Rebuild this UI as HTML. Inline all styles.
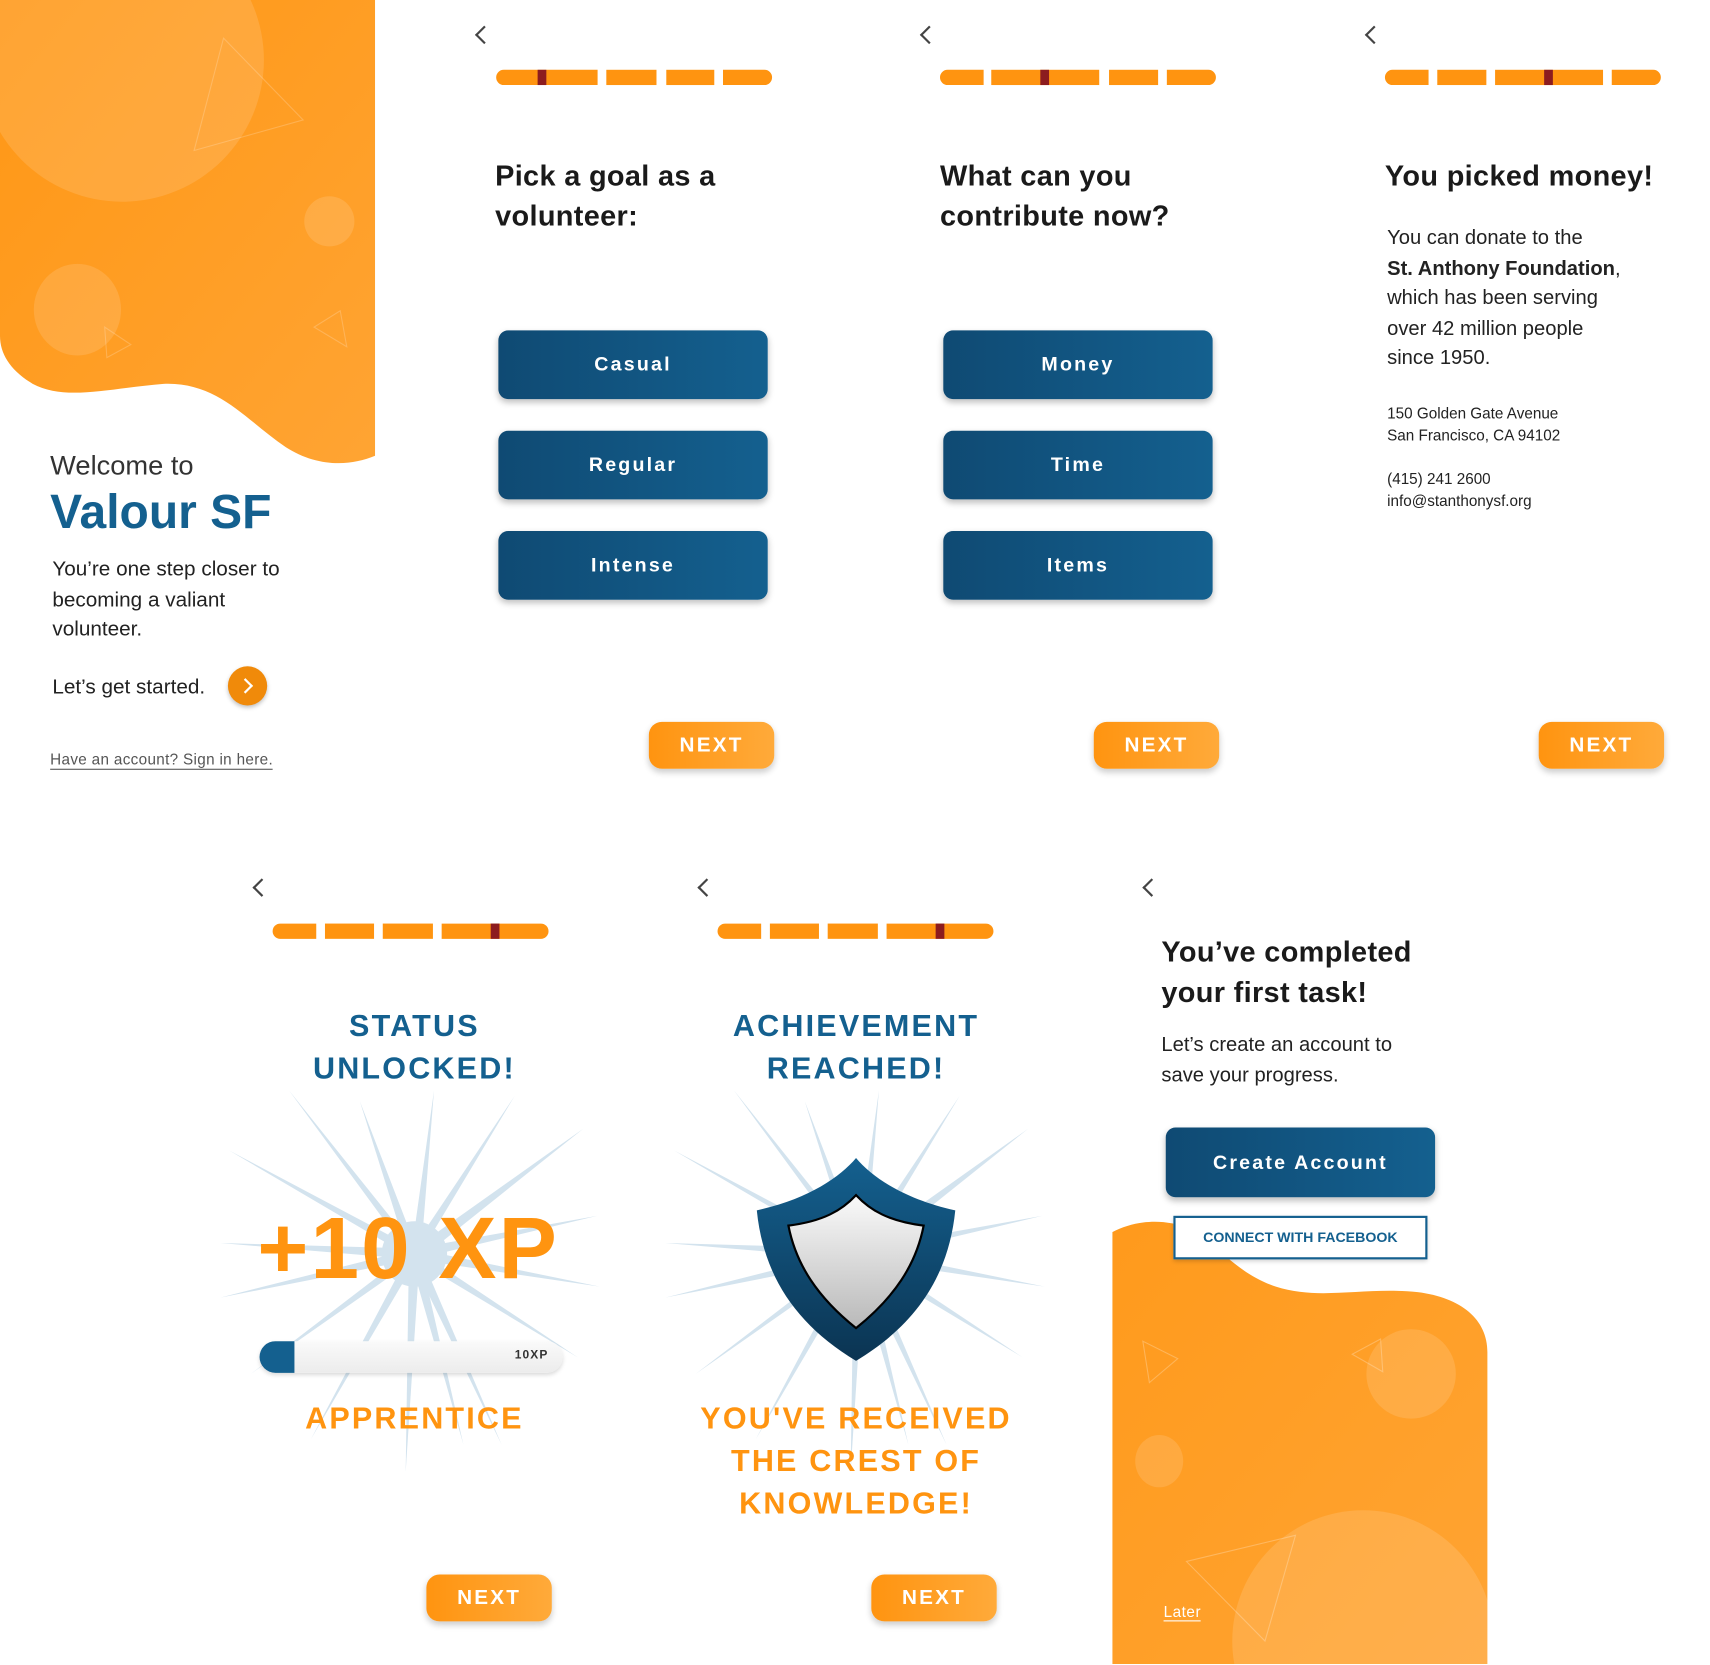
<!DOCTYPE html>
<html><head><meta charset="utf-8"><style>
html,body{margin:0;padding:0;background:#fff;overflow:hidden;width:1710px;height:1665px}
#c{position:relative;width:1710px;height:1665px;overflow:hidden}
#w{position:absolute;left:0;top:0;width:1568px;height:1526px;overflow:hidden;transform:scale(1.0905,1.0904);transform-origin:0 0;font-family:"Liberation Sans",sans-serif;color:#1a1a1a}
.a{position:absolute}
.seg{position:absolute;height:14px;background:#ff9410}
.mk{position:absolute;width:8px;height:14px;background:#8c1c1f}
.btn{position:absolute;width:247px;height:63px;border-radius:9px;background:linear-gradient(90deg,#0f4a73,#14608f);color:#fff;font-weight:bold;font-size:18px;letter-spacing:2px;text-align:center;line-height:63px;box-shadow:0 3px 6px rgba(0,0,0,.25)}
.next{position:absolute;width:115px;height:43px;border-radius:12px;background:linear-gradient(90deg,#ff9410,#ffaa3a);color:#fff;font-weight:bold;font-size:19px;letter-spacing:2px;text-align:center;line-height:43px;box-shadow:0 3px 6px rgba(0,0,0,.2)}
.back{position:absolute;width:10px;height:10px;border-left:2px solid #444;border-bottom:2px solid #444;transform:rotate(45deg)}
.h{position:absolute;font-size:26.5px;font-weight:bold;line-height:37px;letter-spacing:.3px;color:#1a1a1a;white-space:nowrap}
.big{position:absolute;font-weight:900;text-align:center;letter-spacing:2px;font-size:28px;line-height:39px}
</style></head><body><div id="c"><div id="w">

<svg class="a" style="left:0;top:0" width="344" height="430">
<defs><linearGradient id="g1" x1="0" y1="0" x2="1" y2="1"><stop offset="0" stop-color="#ff9715"/><stop offset="1" stop-color="#ffa433"/></linearGradient></defs>
<path d="M0 0H344V418C320 428 290 428 262 410C225 385 200 350 150 352C100 356 60 368 30 352C10 340 0 325 0 308Z" fill="url(#g1)"/>
<circle cx="112" cy="55" r="130" fill="#fff" opacity=".13"/>
<circle cx="302" cy="203" r="23" fill="#fff" opacity=".13"/>
<ellipse cx="71" cy="284" rx="40" ry="42" fill="#fff" opacity=".13"/>
<path d="M205 35L278 110 178 138Z" fill="none" stroke="#fff" stroke-opacity=".2"/>
<path d="M96 300L120 316 98 328Z" fill="none" stroke="#fff" stroke-opacity=".2"/>
<path d="M312 285L318 318 288 300Z" fill="none" stroke="#fff" stroke-opacity=".2"/>
</svg>
<div class="a" style="left:46px;top:413px;font-size:25px;color:#333">Welcome to</div>
<div class="a" style="left:46px;top:445px;font-size:44px;font-weight:bold;color:#14608f">Valour SF</div>
<div class="a" style="left:48px;top:509px;font-size:19px;line-height:27.5px;color:#222">You’re one step closer to<br>becoming a valiant<br>volunteer.</div>
<div class="a" style="left:48px;top:620px;font-size:19px;color:#222">Let’s get started.</div>
<div class="a" style="left:209px;top:611px;width:36px;height:36px;border-radius:50%;background:#f08a0a;box-shadow:0 2px 4px rgba(0,0,0,.25)"><div class="a" style="left:11px;top:13px;width:8px;height:8px;border-right:2px solid #fff;border-top:2px solid #fff;transform:rotate(45deg)"></div></div>
<div class="a" style="left:46px;top:688px;font-size:14px;color:#555;border-bottom:1px solid #555;padding-bottom:1px;letter-spacing:.3px">Have an account? Sign in here.</div>

<div class="back" style="left:438px;top:26px"></div>
<div class="seg" style="left:455px;top:64px;width:93px;border-radius:7px 0 0 7px"></div><div class="mk" style="left:493px;top:64px"></div>
<div class="seg" style="left:556px;top:64px;width:46px"></div><div class="seg" style="left:611px;top:64px;width:44px"></div><div class="seg" style="left:663px;top:64px;width:45px;border-radius:0 7px 7px 0"></div>
<div class="h" style="left:454px;top:143px">Pick a goal as a<br>volunteer:</div>
<div class="btn" style="left:457px;top:303px">Casual</div>
<div class="btn" style="left:457px;top:395px">Regular</div>
<div class="btn" style="left:457px;top:487px">Intense</div>
<div class="next" style="left:595px;top:662px">NEXT</div>

<div class="back" style="left:846px;top:26px"></div>
<div class="seg" style="left:862px;top:64px;width:40px;border-radius:7px 0 0 7px"></div>
<div class="seg" style="left:909px;top:64px;width:99px"></div><div class="mk" style="left:954px;top:64px"></div>
<div class="seg" style="left:1017px;top:64px;width:45px"></div><div class="seg" style="left:1070px;top:64px;width:45px;border-radius:0 7px 7px 0"></div>
<div class="h" style="left:862px;top:143px">What can you<br>contribute now?</div>
<div class="btn" style="left:865px;top:303px">Money</div>
<div class="btn" style="left:865px;top:395px">Time</div>
<div class="btn" style="left:865px;top:487px">Items</div>
<div class="next" style="left:1003px;top:662px">NEXT</div>

<div class="back" style="left:1254px;top:26px"></div>
<div class="seg" style="left:1270px;top:64px;width:40px;border-radius:7px 0 0 7px"></div>
<div class="seg" style="left:1318px;top:64px;width:45px"></div>
<div class="seg" style="left:1371px;top:64px;width:99px"></div><div class="mk" style="left:1416px;top:64px"></div>
<div class="seg" style="left:1478px;top:64px;width:45px;border-radius:0 7px 7px 0"></div>
<div class="h" style="left:1270px;top:143px">You picked money!</div>
<div class="a" style="left:1272px;top:204px;font-size:18.5px;line-height:27.5px;color:#222">You can donate to the<br><b>St. Anthony Foundation</b>,<br>which has been serving<br>over 42 million people<br>since 1950.</div>
<div class="a" style="left:1272px;top:369px;font-size:14px;line-height:20px;color:#222">150 Golden Gate Avenue<br>San Francisco, CA 94102</div>
<div class="a" style="left:1272px;top:429px;font-size:14px;line-height:20px;color:#222">(415) 241 2600<br>info@stanthonysf.org</div>
<div class="next" style="left:1411px;top:662px">NEXT</div>

<div class="back" style="left:234px;top:808px"></div>
<div class="seg" style="left:250px;top:847px;width:40px;border-radius:7px 0 0 7px"></div>
<div class="seg" style="left:298px;top:847px;width:45px"></div><div class="seg" style="left:351px;top:847px;width:46px"></div>
<div class="seg" style="left:405px;top:847px;width:98px;border-radius:0 7px 7px 0"></div><div class="mk" style="left:450px;top:847px"></div>
<svg class="a" style="left:200px;top:980px" width="360" height="370" viewBox="-180 -170 360 370">
<g fill="#d3e3ee" id="star">
<path d="M-6 0L-50-140 0-10Z"/><path d="M-3 0L18-150 6 0Z"/><path d="M-5 0L92-145 5 0Z"/><path d="M0-5L155-115 5 5Z"/>
<path d="M0-5L168-35 0 5Z"/><path d="M0-5L170 30 0 5Z"/><path d="M0-5L150 95 0 5Z"/><path d="M-5 0L80 175 5 0Z"/>
<path d="M-5 0L45 175 5 0Z"/><path d="M-5 0L-8 200 5 0Z"/><path d="M-5 0L-95 170 5 0Z"/><path d="M0-5L-150 110 0 5Z"/>
<path d="M0-5L-178 40 0 5Z"/><path d="M0-5L-178-10 0 5Z"/><path d="M0-5L-170-95 0 5Z"/><path d="M-5 0L-115-150 5 0Z"/>
<circle r="30"/>
</g></svg>
<div class="big" style="left:230px;top:921px;width:300px;color:#14608f">STATUS<br>UNLOCKED!</div>
<div class="a" style="left:236px;top:1100px;font-size:80px;font-weight:900;color:#ff9410;letter-spacing:2px;line-height:90px">+10 XP</div>
<div class="a" style="left:238px;top:1230px;width:278px;height:29px;border-radius:15px;background:linear-gradient(#fafafa,#ececec);box-shadow:0 2px 4px rgba(0,0,0,.15)"></div>
<div class="a" style="left:238px;top:1230px;width:32px;height:29px;border-radius:15px 0 0 15px;background:#14608f"></div>
<div class="a" style="left:472px;top:1237px;font-size:11px;font-weight:bold;letter-spacing:1px;color:#333">10XP</div>
<div class="big" style="left:230px;top:1281px;width:300px;color:#ff9410">APPRENTICE</div>
<div class="next" style="left:391px;top:1444px">NEXT</div>

<div class="back" style="left:642px;top:808px"></div>
<div class="seg" style="left:658px;top:847px;width:40px;border-radius:7px 0 0 7px"></div>
<div class="seg" style="left:706px;top:847px;width:45px"></div><div class="seg" style="left:759px;top:847px;width:46px"></div>
<div class="seg" style="left:813px;top:847px;width:98px;border-radius:0 7px 7px 0"></div><div class="mk" style="left:858px;top:847px"></div>
<svg class="a" style="left:608px;top:980px" width="360" height="370" viewBox="-180 -170 360 370"><use href="#star"/></svg>
<svg class="a" style="left:690px;top:1060px" width="190" height="190" viewBox="0 0 190 190">
<defs><linearGradient id="sb" x1="0" y1="0" x2="0" y2="1"><stop offset="0" stop-color="#14608f"/><stop offset="1" stop-color="#0b3452"/></linearGradient>
<linearGradient id="sw" x1="0" y1="0" x2="0" y2="1"><stop offset="0" stop-color="#fafafa"/><stop offset="1" stop-color="#b9b9b9"/></linearGradient></defs>
<path d="M95 2C110 20 140 40 186 50C180 110 150 155 95 188C40 155 10 110 4 50C50 40 80 20 95 2Z" fill="url(#sb)"/>
<path d="M95 36C108 50 125 60 157 64C150 100 130 130 95 158C60 130 40 100 33 64C65 60 82 50 95 36Z" fill="url(#sw)" stroke="#000" stroke-width="2"/>
</svg>
<div class="big" style="left:610px;top:921px;width:350px;color:#14608f">ACHIEVEMENT<br>REACHED!</div>
<div class="big" style="left:610px;top:1281px;width:350px;color:#ff9410">YOU'VE RECEIVED<br>THE CREST OF<br>KNOWLEDGE!</div>
<div class="next" style="left:799px;top:1444px">NEXT</div>

<div class="back" style="left:1050px;top:808px"></div>
<svg class="a" style="left:1020px;top:1110px" width="344" height="417">
<defs><linearGradient id="g2" x1="0" y1="0" x2="1" y2="1"><stop offset="0" stop-color="#ff9a1c"/><stop offset="1" stop-color="#ffa433"/></linearGradient></defs>
<path d="M0 20C15 12 35 8 55 12C90 18 105 55 150 70C190 83 230 70 280 75C320 80 344 100 344 130V417H0Z" fill="url(#g2)"/>
<circle cx="274" cy="150" r="41" fill="#fff" opacity=".13"/>
<ellipse cx="43" cy="230" rx="22" ry="24" fill="#fff" opacity=".13"/>
<circle cx="230" cy="395" r="120" fill="#fff" opacity=".13"/>
<path d="M28 120L60 136 34 158Z" fill="none" stroke="#fff" stroke-opacity=".25"/>
<path d="M220 132L246 118 248 148Z" fill="none" stroke="#fff" stroke-opacity=".25"/>
<path d="M68 322L168 298 140 395Z" fill="none" stroke="#fff" stroke-opacity=".25"/>
</svg>
<div class="h" style="left:1065px;top:855px">You’ve completed<br>your first task!</div>
<div class="a" style="left:1065px;top:944px;font-size:18.5px;line-height:28px;color:#222">Let’s create an account to<br>save your progress.</div>
<div class="btn" style="left:1069px;top:1034px;height:64px;line-height:64px">Create Account</div>
<div class="a" style="left:1076px;top:1115px;width:229px;height:36px;border:2px solid #14608f;background:#fff;color:#14608f;font-size:13px;font-weight:bold;text-align:center;line-height:36px;box-shadow:0 2px 4px rgba(0,0,0,.2)">CONNECT WITH FACEBOOK</div>
<div class="a" style="left:1067px;top:1470px;font-size:14px;color:#fff;border-bottom:1px solid #fff;letter-spacing:.5px">Later</div>

</div></div></body></html>
